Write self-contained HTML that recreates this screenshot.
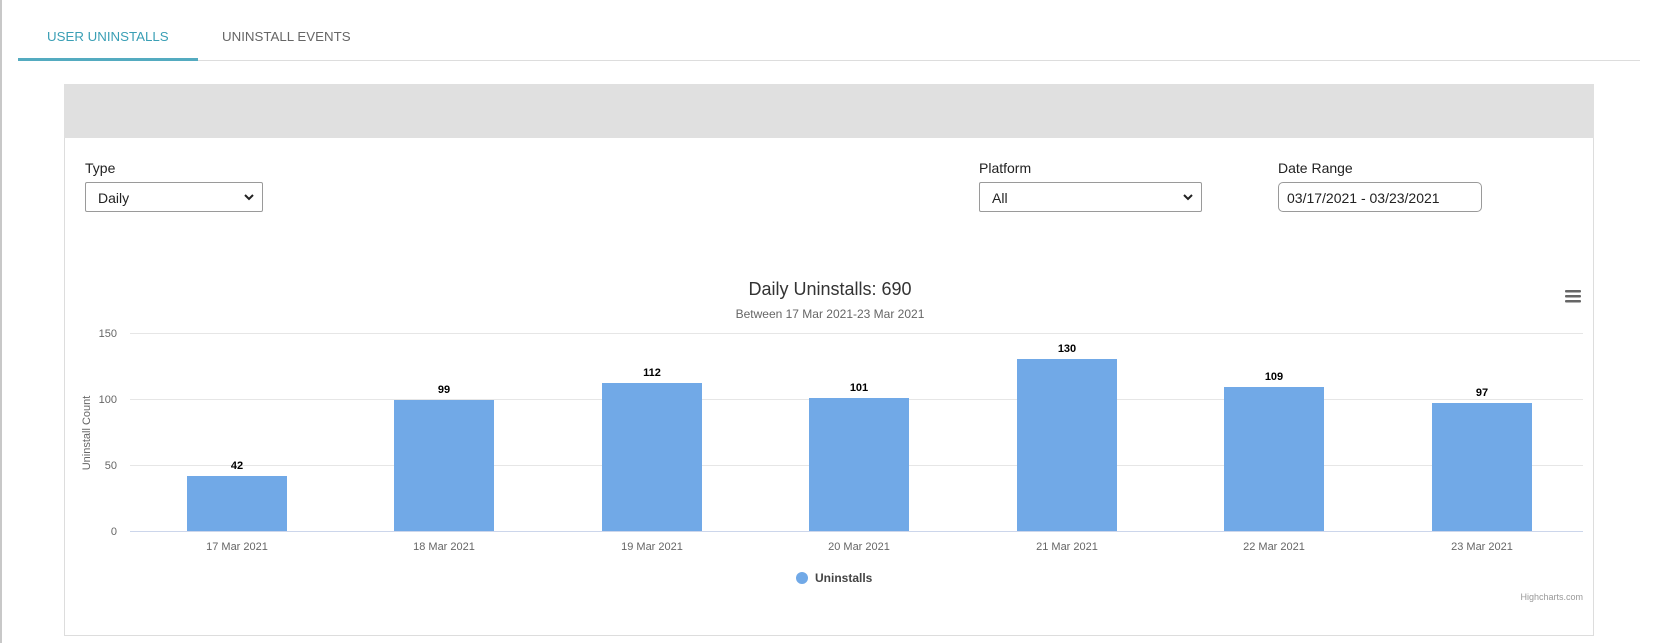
<!DOCTYPE html>
<html><head><meta charset="utf-8"><style>
*{margin:0;padding:0;box-sizing:border-box}
body{width:1657px;height:643px;background:#fff;font-family:"Liberation Sans",sans-serif;position:relative;overflow:hidden;color:#333}
.a{position:absolute}
.lb{font-size:14px;color:#222}
.sel{position:absolute;border:1px solid #9a9a9a;border-radius:2px;height:30px;font-size:14px;color:#222;padding:7px 12px;background:#fff}
.chev{position:absolute;right:8px;top:10px}
</style></head><body>
<div class="a" style="left:0;top:0;width:2px;height:643px;background:#c8c8c8"></div>
<div class="a" style="left:47px;top:29px;font-size:13.3px;color:#3a9fb5">USER UNINSTALLS</div>
<div class="a" style="left:222px;top:29px;font-size:13.3px;color:#666">UNINSTALL EVENTS</div>
<div class="a" style="left:18px;top:60px;width:1622px;height:1px;background:#ddd"></div>
<div class="a" style="left:18px;top:58px;width:180px;height:3px;background:#54abc0"></div>

<div class="a" style="left:64px;top:84px;width:1530px;height:552px;border:1px solid #ddd;border-top:none"></div>
<div class="a" style="left:64px;top:84px;width:1530px;height:54px;background:#e0e0e0"></div>

<div class="a lb" style="left:85px;top:160px">Type</div>
<div class="sel" style="left:85px;top:182px;width:178px">Daily<svg class="chev" width="10" height="8" viewBox="0 0 10 8"><path d="M1 2l4 4 4-4" stroke="#222" stroke-width="2" fill="none"/></svg></div>
<div class="a lb" style="left:979px;top:160px">Platform</div>
<div class="sel" style="left:979px;top:182px;width:223px">All<svg class="chev" width="10" height="8" viewBox="0 0 10 8"><path d="M1 2l4 4 4-4" stroke="#222" stroke-width="2" fill="none"/></svg></div>
<div class="a lb" style="left:1278px;top:160px">Date Range</div>
<div class="sel" style="left:1278px;top:182px;width:204px;border-radius:5px;padding-left:8px">03/17/2021 - 03/23/2021</div>

<svg class="a" style="left:0;top:0" width="1657" height="643">
<g font-family="Liberation Sans, sans-serif">
<text x="830" y="295" text-anchor="middle" font-size="18" fill="#333">Daily Uninstalls: 690</text>
<text x="830" y="318" text-anchor="middle" font-size="12" fill="#666">Between 17 Mar 2021-23 Mar 2021</text>
<g fill="#666"><rect x="1565" y="290" width="16" height="2.5" rx="1"/><rect x="1565" y="295" width="16" height="2.5" rx="1"/><rect x="1565" y="300" width="16" height="2.5" rx="1"/></g>
<g stroke="#e6e6e6"><line x1="130" x2="1583" y1="333.5" y2="333.5"/><line x1="130" x2="1583" y1="399.5" y2="399.5"/><line x1="130" x2="1583" y1="465.5" y2="465.5"/></g>
<line x1="130" x2="1583" y1="531.5" y2="531.5" stroke="#ccd6eb"/>
<g font-size="11" fill="#666" text-anchor="end"><text x="117" y="337">150</text><text x="117" y="403">100</text><text x="117" y="469">50</text><text x="117" y="535">0</text></g>
<text transform="translate(90,433) rotate(-90)" text-anchor="middle" font-size="11" fill="#666">Uninstall Count</text>
<g fill="#71a9e7">
<rect x="187" y="476" width="100" height="55"/>
<rect x="394" y="400" width="100" height="131"/>
<rect x="602" y="383" width="100" height="148"/>
<rect x="809" y="398" width="100" height="133"/>
<rect x="1017" y="359" width="100" height="172"/>
<rect x="1224" y="387" width="100" height="144"/>
<rect x="1432" y="403" width="100" height="128"/>
</g>
<g font-size="11" font-weight="bold" fill="#000" text-anchor="middle">
<text x="237" y="469">42</text><text x="444" y="393">99</text><text x="652" y="376">112</text><text x="859" y="391">101</text><text x="1067" y="352">130</text><text x="1274" y="380">109</text><text x="1482" y="396">97</text>
</g>
<g font-size="11" fill="#666" text-anchor="middle">
<text x="237" y="550">17 Mar 2021</text><text x="444" y="550">18 Mar 2021</text><text x="652" y="550">19 Mar 2021</text><text x="859" y="550">20 Mar 2021</text><text x="1067" y="550">21 Mar 2021</text><text x="1274" y="550">22 Mar 2021</text><text x="1482" y="550">23 Mar 2021</text>
</g>
<circle cx="802" cy="578" r="6" fill="#71a9e7"/>
<text x="815" y="582" font-size="12" font-weight="bold" fill="#444">Uninstalls</text>
<text x="1583" y="600" text-anchor="end" font-size="9" fill="#999">Highcharts.com</text>
</g></svg>
</body></html>
